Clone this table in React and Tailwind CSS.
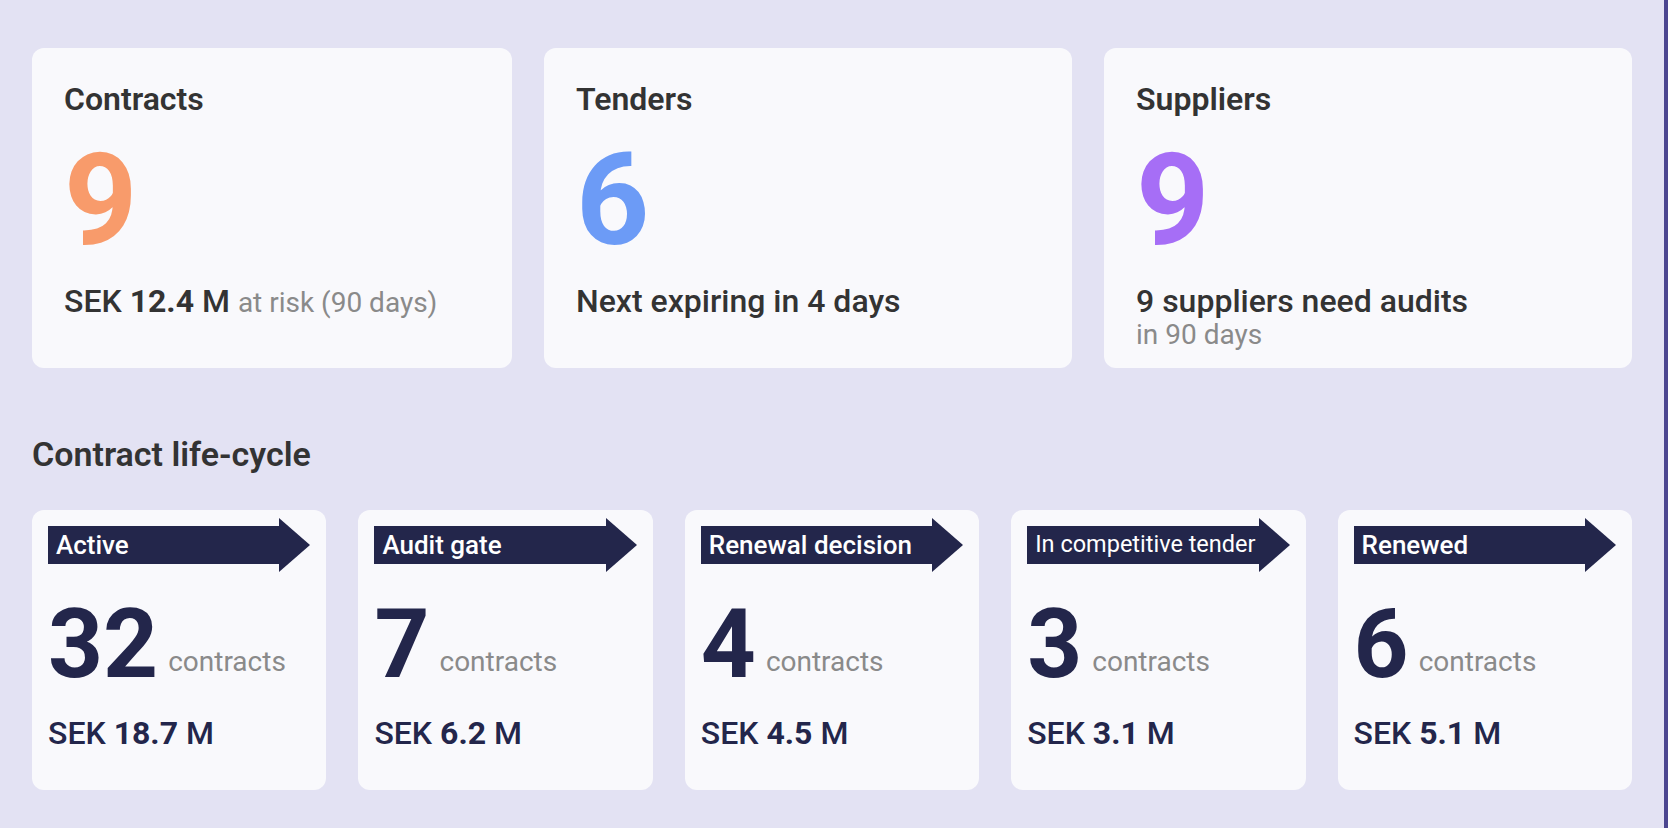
import React from 'react'

const summary = [
    { title: 'Contracts', value: '9', color: 'text-[#f89b6b]', kind: 'risk' },
    { title: 'Tenders', value: '6', color: 'text-[#6c9bf6]', kind: 'tender' },
    { title: 'Suppliers', value: '9', color: 'text-[#a66ef6]', kind: 'audit' },
]

const stages = [
    { label: 'Active', count: 32, amount: '18.7' },
    { label: 'Audit gate', count: 7, amount: '6.2' },
    { label: 'Renewal decision', count: 4, amount: '4.5' },
    { label: 'In competitive tender', count: 3, amount: '3.1', small: true },
    { label: 'Renewed', count: 6, amount: '5.1' },
]

function SummaryCard({ item }) {
    return (
        <div className="h-[320px] rounded-xl bg-[#f9f9fc] px-8 pt-8">
            <div className="text-[32px] leading-[38px] font-semibold text-[#333333]">
                {item.title}
            </div>
            <div className={`mt-[18px] text-9xl leading-none font-bold ${item.color}`}>
                {item.value}
            </div>
            <div className="mt-5 text-[#333333]">
                {item.kind === 'risk' && (
                    <div className="text-[32px] leading-[34px] font-medium">
                        SEK <span className="font-bold">12.4</span> M{' '}
                        <span className="text-[28px] font-normal text-[#8a8a8a]">
                            at risk (90 days)
                        </span>
                    </div>
                )}
                {item.kind === 'tender' && (
                    <div className="text-[32px] leading-[34px] font-medium">
                        Next expiring in 4 days
                    </div>
                )}
                {item.kind === 'audit' && (
                    <>
                        <div className="text-[32px] leading-[34px] font-medium">
                            9 suppliers need audits
                        </div>
                        <div className="text-[28px] leading-[34px] text-[#8a8a8a]">
                            in 90 days
                        </div>
                    </>
                )}
            </div>
        </div>
    )
}

function StageCard({ stage }) {
    return (
        <div className="h-[280px] rounded-xl bg-[#f9f9fc] px-4 pt-2 text-[#23264b]">
            {/* banner arrow */}
            <div className="flex h-[54px] items-center">
                <div className="flex h-[38px] flex-1 items-center bg-[#23264b] pl-2 text-white">
                    <span
                        className={
                            stage.small
                                ? 'relative z-10 text-[23.5px] leading-none whitespace-nowrap'
                                : 'text-[26px] leading-none font-medium whitespace-nowrap'
                        }
                    >
                        {stage.label}
                    </span>
                </div>
                <svg width="31" height="54" viewBox="0 0 31 54" className="shrink-0">
                    <polygon points="0,0 31,27 0,54" fill="#23264b" />
                </svg>
            </div>
            <div className="mt-6 flex items-end gap-2.5">
                <span className="text-8xl leading-none font-bold">{stage.count}</span>
                <span className="mb-[16px] text-[28px] leading-none text-[#8a8a8a]">
                    contracts
                </span>
            </div>
            <div className="mt-6 text-[32px] leading-[34px] font-medium">
                SEK <span className="font-bold">{stage.amount}</span> M
            </div>
        </div>
    )
}

export default function App() {
    return (
        <div className="min-h-screen w-full border-r-4 border-[#4c4690] bg-[#e3e2f3] px-8 pt-12 pb-10 font-['Roboto','Liberation_Sans',sans-serif]">
            <div className="grid grid-cols-[480px_1fr_1fr] gap-8">
                {summary.map((item) => (
                    <SummaryCard key={item.title} item={item} />
                ))}
            </div>

            <h2 className="mt-[66px] text-[34px] leading-[40px] font-semibold text-[#333333]">
                Contract life-cycle
            </h2>

            <div className="mt-9 grid grid-cols-5 gap-8">
                {stages.map((stage) => (
                    <StageCard key={stage.label} stage={stage} />
                ))}
            </div>
        </div>
    )
}
